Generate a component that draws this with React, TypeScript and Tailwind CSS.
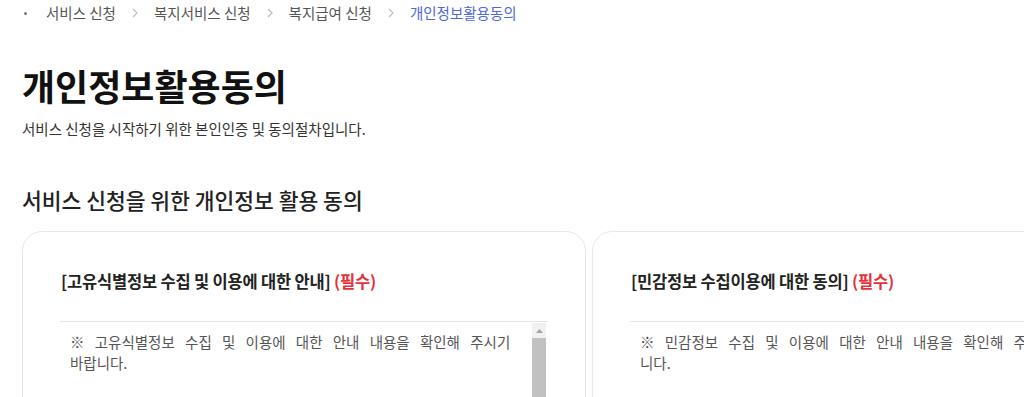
const crumbs = ["서비스 신청", "복지서비스 신청", "복지급여 신청"];

const cards = [
  {
    title: "[고유식별정보 수집 및 이용에 대한 안내]",
    body: "※ 고유식별정보 수집 및 이용에 대한 안내 내용을 확인해 주시기 바랍니다.",
  },
  {
    title: "[민감정보 수집이용에 대한 동의]",
    body: "※ 민감정보 수집 및 이용에 대한 안내 내용을 확인해 주시기 바랍니다.",
  },
];

function Chevron() {
  return (
    <svg className="mx-[16px] w-[6px] h-[10px]" viewBox="0 0 6 10" fill="none">
      <path d="M1 1l4 4-4 4" stroke="#bdbdbd" strokeWidth="1.2" />
    </svg>
  );
}

function ConsentCard({ title, body }: { title: string; body: string }) {
  return (
    <div className="w-[564px] shrink-0 border border-[#e8e8e8] rounded-[20px] pt-[38px] px-[37px] pb-[40px] bg-white">
      <h3 className="pl-[1px] text-[16.5px] leading-[22px] font-bold text-[#222] tracking-[-0.2px]">
        {title} <span className="text-[#e3323b]">(필수)</span>
      </h3>
      <div className="mt-[29px] border-t border-[#e6e6e6] pr-[2px]">
        <div className="mt-[1px] h-[220px] flex overflow-hidden">
          <p className="flex-1 pl-[10px] pr-[6px] pt-[8px] text-[14.5px] leading-[21px] text-[#555] [word-spacing:7px]">
            {body}
          </p>
          {/* scrollbar */}
          <div className="w-[14px] flex flex-col bg-[#f1f1f1]">
            <div className="h-[15px] flex items-center justify-center">
              <svg className="w-[7px] h-[4px]" viewBox="0 0 7 4">
                <path d="M3.5 0L7 4H0z" fill="#a3a3a3" />
              </svg>
            </div>
            <div className="flex-1 bg-[#c1c1c1]" />
          </div>
        </div>
      </div>
    </div>
  );
}

export default function App() {
  return (
    <div className="w-[1024px] h-[397px] overflow-hidden bg-white pl-[22px] font-['Noto_Sans_CJK_KR',sans-serif]">
      <nav className="flex items-center h-[26px] text-[14.5px] text-[#555]">
        <span className="ml-[2px] mr-[19px] w-[3px] h-[3px] rounded-full bg-[#777]" />
        {crumbs.map((c) => (
          <span key={c} className="flex items-center">
            {c}
            <Chevron />
          </span>
        ))}
        <span className="text-[#4f67dc]">개인정보활용동의</span>
      </nav>

      <h1 className="mt-[39px] text-[36px] leading-[40px] font-bold text-[#111]">개인정보활용동의</h1>
      <p className="mt-[14px] text-[14.5px] leading-[20px] text-[#333]">
        서비스 신청을 시작하기 위한 본인인증 및 동의절차입니다.
      </p>

      <h2 className="mt-[47px] text-[21.5px] leading-[28px] font-medium text-[#222]">서비스 신청을 위한 개인정보 활용 동의</h2>

      <div className="mt-[17px] flex gap-[6px]">
        {cards.map((c) => (
          <ConsentCard key={c.title} title={c.title} body={c.body} />
        ))}
      </div>
    </div>
  );
}
